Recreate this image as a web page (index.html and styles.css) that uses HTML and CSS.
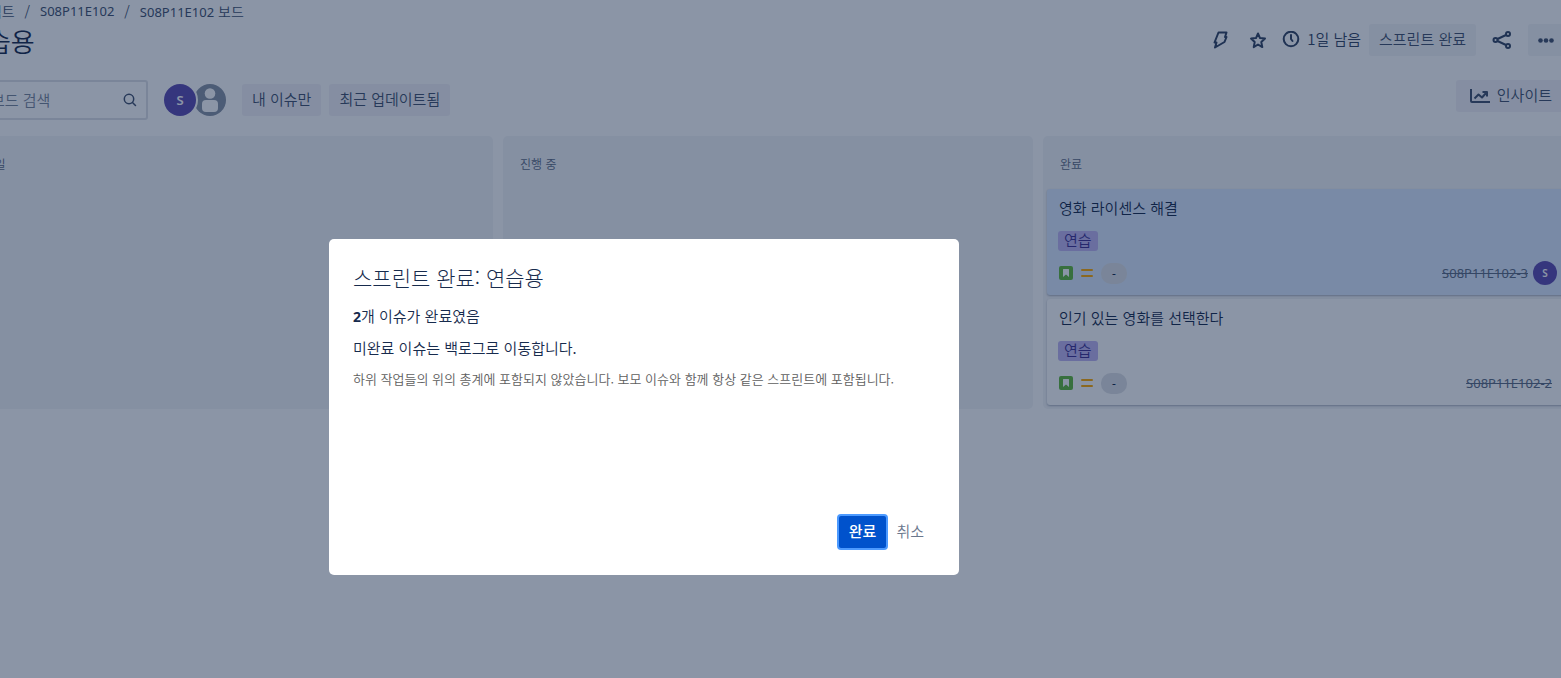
FILE: index.html
```html
<!DOCTYPE html>
<html lang="ko">
<head>
<meta charset="utf-8">
<title>S08P11E102 보드</title>
<link rel="stylesheet" href="styles.css">
</head>
<body>
<main class="page">
  <header class="page-header">
    <div class="heading">
      <nav class="breadcrumbs" aria-label="탐색 경로">
        <a href="#">프로젝트</a><span>/</span><a href="#" class="latin">S08P11E102</a><span>/</span><a href="#"><span class="latin">S08P11E102</span> 보드</a>
      </nav>
      <h1 class="title">연습용</h1>
    </div>
    <div class="actions">
      <button class="icon-button" aria-label="자동화">
        <svg width="20" height="20" viewBox="0 0 20 20" fill="none" stroke="currentColor" stroke-width="2" stroke-linejoin="round"><path d="M8.500 2.500H16.500l-1.500 4.500h1.500l-2 5L5 17.500l1.500-5H4.500z"/></svg>
      </button>
      <button class="icon-button" aria-label="즐겨찾기">
        <svg width="20" height="20" viewBox="0 0 20 20" fill="none" stroke="currentColor" stroke-width="2" stroke-linejoin="round"><path d="M10 3.500l2 4.600 5 .5-3.700 3.500 1 5L10 14.500l-4.300 2.600 1-5L3 8.600l5-.5z"/></svg>
      </button>
      <div class="remaining">
        <svg width="18" height="18" viewBox="0 0 18 18" fill="none" stroke="currentColor" stroke-width="2" stroke-linecap="round"><circle cx="9" cy="8" r="7.300"/><path d="M9 4V8l1.500 2"/></svg>
        <span>1일 남음</span>
      </div>
      <button class="button">스프린트 완료</button>
      <button class="icon-button share" aria-label="공유">
        <svg width="20" height="20" viewBox="0 0 20 20" fill="none" stroke="currentColor" stroke-width="2"><circle cx="3.500" cy="10" r="2"/><circle cx="16" cy="4" r="2"/><circle cx="16" cy="16" r="2"/><path d="M5.500 9L14 5M5.500 11l8.500 4"/></svg>
      </button>
      <button class="button more" aria-label="더 보기">
        <svg width="16" height="6" viewBox="0 0 16 6" fill="currentColor"><circle cx="2.500" cy="3.500" r="2.300"/><circle cx="8" cy="3.500" r="2.300"/><circle cx="13.500" cy="3.500" r="2.300"/></svg>
      </button>
    </div>
  </header>

  <div class="toolbar">
    <label class="search">
      <input type="text" placeholder="보드 검색" aria-label="보드 검색">
      <svg width="16" height="16" viewBox="0 0 16 16" fill="none" stroke="currentColor" stroke-width="1.500" stroke-linecap="round"><circle cx="7" cy="7" r="4.700"/><path d="M10.500 10.500L13.500 13.500"/></svg>
    </label>
    <div class="people">
      <span class="avatar avatar-ring">S</span>
      <svg class="avatar-empty" width="32" height="32" viewBox="0 0 32 32"><circle cx="16" cy="16" r="16" fill="#8993a4"/><circle cx="16" cy="9.500" r="5.300" fill="#fff"/><rect x="8" y="16" width="16" height="12" rx="4" fill="#fff"/></svg>
    </div>
    <button class="button filter">내 이슈만</button>
    <button class="button filter">최근 업데이트됨</button>
    <button class="button insights">
      <svg width="20" height="16" viewBox="0 0 20 16" fill="none" stroke="currentColor" stroke-width="2" stroke-linejoin="round"><path d="M1 1v12q0 1 1 1h18"/><path d="M4.500 10.500L8.500 6.500l3.500 3L16.500 4.500M12.500 4H17v4.500"/></svg>
      <span>인사이트</span>
    </button>
  </div>

  <div class="board">
    <section class="column"><h2>할 일</h2></section>
    <section class="column"><h2>진행 중</h2></section>
    <section class="column">
      <h2>완료</h2>
      <article class="card selected">
        <p>영화 라이센스 해결</p>
        <span class="tag">연습</span>
        <div class="meta">
          <svg width="14" height="14" viewBox="0 0 14 14"><rect width="14" height="14" rx="2" fill="#63ba3c"/><path d="M4 3.500q0-.5.500-.5h5q.5 0 .5.500V11L7 8.500 4 11z" fill="#fff"/></svg>
          <svg width="12" height="8" viewBox="0 0 12 8" fill="#ffab00"><rect width="12" height="2" rx="1"/><rect y="6" width="12" height="2" rx="1"/></svg>
          <span class="estimate">-</span>
          <a href="#" class="key latin">S08P11E102-3</a>
          <span class="avatar small">S</span>
        </div>
      </article>
      <article class="card">
        <p>인기 있는 영화를 선택한다</p>
        <span class="tag">연습</span>
        <div class="meta">
          <svg width="14" height="14" viewBox="0 0 14 14"><rect width="14" height="14" rx="2" fill="#63ba3c"/><path d="M4 3.500q0-.5.500-.5h5q.5 0 .5.500V11L7 8.500 4 11z" fill="#fff"/></svg>
          <svg width="12" height="8" viewBox="0 0 12 8" fill="#ffab00"><rect width="12" height="2" rx="1"/><rect y="6" width="12" height="2" rx="1"/></svg>
          <span class="estimate">-</span>
          <a href="#" class="key latin unassigned">S08P11E102-2</a>
        </div>
      </article>
    </section>
  </div>
</main>

<div class="blanket">
  <section class="dialog" role="dialog" aria-modal="true" aria-labelledby="dialog-title">
    <h2 id="dialog-title">스프린트 완료: 연습용</h2>
    <div class="dialog-body">
      <p><strong>2</strong>개 이슈가 완료였음</p>
      <p>미완료 이슈는 백로그로 이동합니다.</p>
      <p class="hint">하위 작업들의 위의 총계에 포함되지 않았습니다. 보모 이슈와 함께 항상 같은 스프린트에 포함됩니다.</p>
    </div>
    <footer class="dialog-footer">
      <button class="primary">완료</button>
      <button class="cancel">취소</button>
    </footer>
  </section>
</div>
</body>
</html>
```
FILE: styles.css
```css
* { box-sizing: border-box; }

body {
  margin: 0;
  overflow: hidden;
  background: #fff;
  color: #172b4d;
  font: 350 15px/20px "Noto Sans CJK KR", sans-serif;
}

h1, h2, p { margin: 0; font-weight: 350; }

button, input {
  font: inherit;
  color: inherit;
  border: 0;
  padding: 0;
  background: none;
}

a { color: inherit; text-decoration: none; }
svg { display: block; flex: none; }

.latin { font-family: "Noto Sans", sans-serif; font-size: 13px; font-weight: 400; }

/* The board is wider than the window and scrolled a little to the right. */
.page { margin: 0 -12px 0 -37px; }

.page-header {
  display: flex;
  justify-content: space-between;
  height: 80px;
  padding-right: 9px;
}

.breadcrumbs {
  display: flex;
  gap: 10px;
  padding-top: 1px;
  font-size: 14px;
  color: #42526e;
}

.breadcrumbs a { white-space: pre; }

.title {
  padding-top: 3px;
  font-size: 26px;
  line-height: 32px;
}

.actions {
  display: flex;
  align-items: center;
  height: 32px;
  margin-top: 24px;
  color: #344563;
}

.icon-button { display: flex; margin-right: 18px; }
.remaining { display: flex; align-items: center; gap: 7px; margin: 0 8px 0 -4px; }
.remaining span, .button { line-height: 18px; padding-bottom: 2px; }
.icon-button.share { margin: 0 16px; }

.button {
  height: 32px;
  padding: 0 10px 2px;
  border-radius: 3px;
  background: #f4f5f7;
  color: #42526e;
}

.more { display: flex; align-items: center; padding-bottom: 0; }

.toolbar { display: flex; height: 56px; color: #42526e; }

.search {
  display: flex;
  align-items: center;
  width: 185px;
  height: 40px;
  padding: 0 8px 0 26px;
  border: 2px solid #dfe1e6;
  border-radius: 3px;
}

.search input { flex: 1; min-width: 0; outline: 0; }
.search input::placeholder { color: #7a869a; opacity: 1; }

.people { display: flex; margin: 4px 16px 0; }

.avatar {
  display: flex;
  align-items: center;
  justify-content: center;
  width: 32px;
  height: 32px;
  border-radius: 50%;
  background: #5e4db2;
  color: #fff;
  font: 600 13px/20px "Noto Sans", sans-serif;
}

.avatar-ring { z-index: 1; box-shadow: 0 0 0 2px #fff; }
.avatar-empty { margin-left: -2px; }
.avatar.small { width: 24px; height: 24px; font-size: 10px; }

.filter { margin: 4px 8px 0 0; background: #f4f2f7; }

.insights {
  display: flex;
  align-items: center;
  gap: 7px;
  margin: 0 9px 0 auto;
  padding: 0 12px 0 14px;
  background: #f4f2f7;
}

.insights span { padding-bottom: 2px; }

.board { display: grid; grid-template-columns: repeat(3, 1fr); gap: 10px; }

.column {
  padding: 18px 4px 4px;
  border-radius: 5px;
  background: #f4f5f7;
}

.column h2 {
  margin: 0 13px 15px;
  font-size: 12px;
  color: #5e6c84;
}

.card {
  height: 106px;
  padding: 9px 12px;
  border-radius: 3px;
  background: #fff;
  box-shadow: 0 1px 2px rgba(9, 30, 66, 0.3);
}

.card + .card { margin-top: 4px; }
.selected { background: #deebff; }

.tag {
  display: block;
  width: fit-content;
  margin: 13px 0 0 -1px;
  padding: 0 6px 2px;
  border-radius: 3px;
  background: #c0b6f2;
  color: #403294;
  line-height: 18px;
}

.meta { display: flex; align-items: center; gap: 8px; height: 24px; margin-top: 10px; }

.estimate {
  width: 26px;
  height: 21px;
  border-radius: 10px;
  background: #dfe1e6;
  text-align: center;
  font: 400 12px/21px "Noto Sans", sans-serif;
}

.key { margin-left: auto; color: #5e6c84; text-decoration: line-through; }
.key + .avatar { margin-left: -3px; }
.unassigned { margin-right: 5px; }

.blanket {
  position: fixed;
  inset: 0;
  z-index: 10;
  display: flex;
  justify-content: center;
  align-items: flex-start;
  padding: 239px 273px 0 0;
  background: rgba(9, 30, 66, 0.47);
}

.dialog {
  width: 630px;
  padding: 24px;
  border-radius: 5px;
  background: #fff;
}

.dialog h2 { font-size: 21px; line-height: 28px; font-weight: 300; }
.dialog-body { min-height: 223px; padding-top: 15px; }
.dialog-body p { margin-bottom: 11px; }
.dialog-body .hint { font-size: 13px; color: #5e5e5e; }
.dialog strong { font: 700 14px/20px "Noto Sans", sans-serif; }

.dialog-footer { display: flex; align-items: center; gap: 8px; justify-content: flex-end; padding: 0 11px 1px 0; }

.primary {
  height: 36px;
  padding: 0 10px 2px;
  border: 2px solid #4c9aff;
  border-radius: 4px;
  background: #0052cc;
  color: #fff;
  font-weight: 500;
}

.cancel { color: #6b778c; padding-bottom: 2px; }
```
